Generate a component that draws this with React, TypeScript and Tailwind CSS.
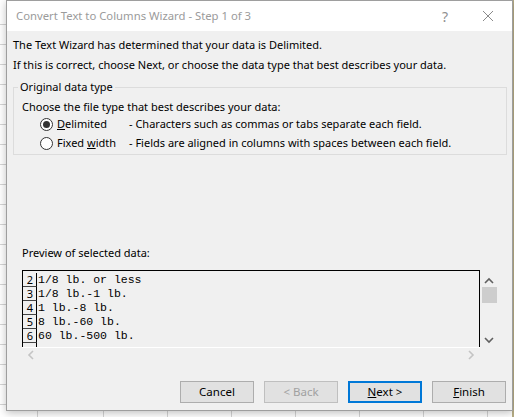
const rows = [
  { n: "2", text: "1/8 lb. or less" },
  { n: "3", text: "1/8 lb.-1 lb." },
  { n: "4", text: "1 lb.-8 lb." },
  { n: "5", text: "8 lb.-60 lb." },
  { n: "6", text: "60 lb.-500 lb." },
  { n: "", text: "" },
];

function Radio({ checked }: { checked: boolean }) {
  return (
    <span className="w-[13px] h-[13px] rounded-full border border-[#333] bg-white flex items-center justify-center shrink-0">
      {checked && <span className="w-[7px] h-[7px] rounded-full bg-[#333]" />}
    </span>
  );
}

function Chevron({ dir, color }: { dir: "up" | "down" | "left" | "right"; color: string }) {
  const d = {
    up: "M1 6 L5 2 L9 6",
    down: "M1 2 L5 6 L9 2",
    left: "M6 1 L2 5 L6 9",
    right: "M2 1 L6 5 L2 9",
  }[dir];
  const vert = dir === "up" || dir === "down";
  return (
    <svg width={vert ? 10 : 8} height={vert ? 8 : 10} viewBox={vert ? "0 0 10 8" : "0 0 8 10"}>
      <path d={d} fill="none" stroke={color} strokeWidth="1.6" />
    </svg>
  );
}

function Button({ children, primary, disabled }: { children: React.ReactNode; primary?: boolean; disabled?: boolean }) {
  return (
    <button
      type="button"
      className={
        primary
          ? "w-[74px] h-[22px] bg-[#e1e1e1] border-2 border-[#0078d7] text-[11.5px] text-black flex items-center justify-center"
          : disabled
          ? "w-[74px] h-[22px] bg-[#e1e1e1] border border-[#bfbfbf] text-[11.5px] text-[#a0a0a0] flex items-center justify-center"
          : "w-[74px] h-[22px] bg-[#e1e1e1] border border-[#adadad] text-[11.5px] text-black flex items-center justify-center"
      }
    >
      {children}
    </button>
  );
}

function Wizard() {
  return (
    <div className="absolute left-[6px] top-0 w-[507px] h-[411px] border border-[#9e9e9e] shadow-[0_2px_8px_rgba(0,0,0,0.25)] flex flex-col bg-[#f0f0f0] font-['Noto_Sans',sans-serif]">
      {/* title bar */}
      <div className="h-[30px] bg-white flex items-center shrink-0">
        <span className="pl-[9px] text-[11.3px] text-[#9b9b9b]">Convert Text to Columns Wizard - Step 1 of 3</span>
        <span className="ml-auto w-[20px] text-center text-[14px] text-[#8f8f8f]">?</span>
        <span className="ml-[27px] mr-[18px] w-[12px] flex items-center justify-center">
          <svg width="12" height="12" viewBox="0 0 12 12">
            <path d="M1 1 L11 11 M11 1 L1 11" stroke="#8a8a8a" strokeWidth="1" />
          </svg>
        </span>
      </div>

      <div className="flex flex-col flex-1 text-[11px] text-black">
        <div className="pl-[6px] pt-[4px] leading-[20px]">
          <p>The Text Wizard has determined that your data is Delimited.</p>
          <p>If this is correct, choose Next, or choose the data type that best describes your data.</p>
        </div>

        <fieldset className="ml-[6px] mr-[5px] mt-[4px] border border-[#dcdcdc] pb-[1px]">
          <legend className="ml-[4px] px-[2px] leading-[16px]">Original data type</legend>
          <p className="pl-[8px] pt-[4px] leading-[16px]">Choose the file type that best describes your data:</p>
          <div className="flex items-center h-[19px] pl-[26px]">
            <Radio checked />
            <span className="ml-[4px] w-[72px]"><span className="underline">D</span>elimited</span>
            <span>- Characters such as commas or tabs separate each field.</span>
          </div>
          <div className="flex items-center h-[19px] pl-[26px]">
            <Radio checked={false} />
            <span className="ml-[4px] w-[72px]">Fixed <span className="underline">w</span>idth</span>
            <span>- Fields are aligned in columns with spaces between each field.</span>
          </div>
        </fieldset>

        <p className="pl-[15px] mt-[90px] leading-[16px]">Preview of selected data:</p>

        <div className="ml-[15px] mt-[9px] w-[475px] flex flex-col">
          <div className="flex h-[77px]">
            <div className="w-[458px] border-l border-t border-r border-black overflow-hidden pt-[2px] font-['Liberation_Mono',monospace] text-[11.5px]">
              {rows.map((r, i) => (
                <div key={i} className="flex h-[14px] leading-[14px]">
                  <span className="w-[14px] shrink-0 border-r border-black border-b border-b-[#444] text-right pr-[3px] text-[11px] font-['Noto_Sans',sans-serif] leading-[13px]">
                    {r.n}
                  </span>
                  <span className="pl-[1px] whitespace-pre">{r.text}</span>
                </div>
              ))}
            </div>
            <div className="ml-[1px] w-[16px] flex flex-col items-center">
              <div className="h-[17px] flex items-end justify-center pb-[2px]">
                <Chevron dir="up" color="#606060" />
              </div>
              <div className="w-[15px] h-[16px] bg-[#cdcdcd]" />
              <div className="flex-1" />
              <div className="h-[14px] flex items-start justify-center pt-[3px]">
                <Chevron dir="down" color="#606060" />
              </div>
            </div>
          </div>
          <div className="w-[458px] h-[14px] border-t border-white flex items-center justify-between px-[5px]">
            <Chevron dir="left" color="#c4c4c4" />
            <Chevron dir="right" color="#c4c4c4" />
          </div>
        </div>

        <div className="mt-auto mb-[7px] flex justify-end gap-[10px] pr-[6px]">
          <Button>Cancel</Button>
          <Button disabled>&lt; Back</Button>
          <Button primary><span><span className="underline">N</span>ext &gt;</span></Button>
          <Button><span><span className="underline">F</span>inish</span></Button>
        </div>
      </div>
    </div>
  );
}

export default function App() {
  return (
    <div className="relative w-[514px] h-[417px] overflow-hidden bg-white bg-[repeating-linear-gradient(to_bottom,transparent_0_19px,#d4d4d4_19px_20px),repeating-linear-gradient(to_right,transparent_0_63px,#d4d4d4_63px_64px)] bg-[position:40px_5px]">
      <div className="absolute right-0 top-0 h-full w-[2px] bg-[#b8ae86]" />
      <Wizard />
    </div>
  );
}
